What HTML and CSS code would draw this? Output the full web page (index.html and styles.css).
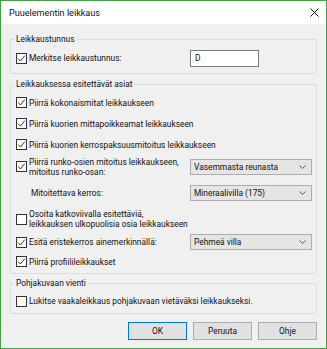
FILE: index.html
```html
<!DOCTYPE html>
<html lang="fi">
<head>
<meta charset="utf-8">
<title>Puuelementin leikkaus</title>
<link rel="stylesheet" href="styles.css">
</head>
<body>
<div class="dialog">
  <div class="titlebar">
    <span class="title">Puuelementin leikkaus</span>
    <svg class="close" width="9" height="9" viewBox="0 0 9 9"><path d="M0.5 0.5L8.5 8.5M8.5 0.5L0.5 8.5" stroke="#111" stroke-width="1"/></svg>
  </div>
  <div class="content">
    <fieldset class="group g1">
      <legend>Leikkaustunnus</legend>
      <div class="row h22 mt2">
        <div class="check"><span class="box"><svg viewBox="0 0 9 9"><polyline points="1.2,4.6 3.4,7 7.8,1.6" /></svg></span><span>Merkitse leikkaustunnus:</span></div>
        <div class="textbox">D</div>
      </div>
    </fieldset>

    <fieldset class="group g2">
      <legend>Leikkauksessa esitettävät asiat</legend>
      <div class="row h21 mt2">
        <div class="check"><span class="box"><svg viewBox="0 0 9 9"><polyline points="1.2,4.6 3.4,7 7.8,1.6" /></svg></span><span>Piirrä kokonaismitat leikkaukseen</span></div>
      </div>
      <div class="row h21">
        <div class="check"><span class="box"><svg viewBox="0 0 9 9"><polyline points="1.2,4.6 3.4,7 7.8,1.6" /></svg></span><span>Piirrä kuorien mittapoikkeamat leikkaukseen</span></div>
      </div>
      <div class="row h21">
        <div class="check wide"><span class="box"><svg viewBox="0 0 9 9"><polyline points="1.2,4.6 3.4,7 7.8,1.6" /></svg></span><span>Piirrä kuorien kerrospaksuusmitoitus leikkaukseen</span></div>
      </div>
      <div class="row h23">
        <div class="check"><span class="box"><svg viewBox="0 0 9 9"><polyline points="1.2,4.6 3.4,7 7.8,1.6" /></svg></span><span class="two">Piirrä runko-osien mitoitus leikkaukseen,<br>mitoitus runko-osan:</span></div>
        <div class="combo"><span>Vasemmasta reunasta</span><svg class="chev" width="7" height="4" viewBox="0 0 7 4"><polyline points="0.5,0.5 3.5,3.5 6.5,0.5"/></svg></div>
      </div>
      <div class="row h30">
        <div class="plain">Mitoitettava kerros:</div>
        <div class="combo"><span>Mineraalivilla (175)</span><svg class="chev" width="7" height="4" viewBox="0 0 7 4"><polyline points="0.5,0.5 3.5,3.5 6.5,0.5"/></svg></div>
      </div>
      <div class="row h22">
        <div class="check wide"><span class="box empty"></span><span class="two">Osoita katkoviivalla esitettäviä,<br>leikkauksen ulkopuolisia osia leikkaukseen</span></div>
      </div>
      <div class="row h24">
        <div class="check"><span class="box"><svg viewBox="0 0 9 9"><polyline points="1.2,4.6 3.4,7 7.8,1.6" /></svg></span><span>Esitä eristekerros ainemerkinnällä:</span></div>
        <div class="combo"><span>Pehmeä villa</span><svg class="chev" width="7" height="4" viewBox="0 0 7 4"><polyline points="0.5,0.5 3.5,3.5 6.5,0.5"/></svg></div>
      </div>
      <div class="row h15">
        <div class="check"><span class="box"><svg viewBox="0 0 9 9"><polyline points="1.2,4.6 3.4,7 7.8,1.6" /></svg></span><span>Piirrä profiilileikkaukset</span></div>
      </div>
    </fieldset>

    <fieldset class="group g3">
      <legend>Pohjakuvaan vienti</legend>
      <div class="row h20 mt2">
        <div class="check wide"><span class="box empty"></span><span>Lukitse vaakaleikkaus pohjakuvaan vietäväksi leikkaukseksi.</span></div>
      </div>
    </fieldset>

    <div class="buttons">
      <button class="btn default">OK</button>
      <button class="btn">Peruuta</button>
      <button class="btn">Ohje</button>
    </div>
  </div>
</div>
</body>
</html>
```

FILE: styles.css
```css
html, body {
  margin: 0;
  padding: 0;
  width: 327px;
  height: 349px;
  overflow: hidden;
}
body {
  font-family: Roboto, "Liberation Sans", sans-serif;
  font-size: 8.4px;
  color: #111;
}
.dialog {
  box-sizing: border-box;
  width: 327px;
  height: 349px;
  border: 1px solid #46a046;
  background: #f0f0f0;
  display: flex;
  flex-direction: column;
}
.titlebar {
  height: 23px;
  background: #fff;
  display: flex;
  align-items: center;
  justify-content: space-between;
  padding: 0 7px 0 8px;
}
.title {
  font-size: 9.1px;
}
.close {
  display: block;
}
.content {
  flex: 1;
  display: flex;
  flex-direction: column;
  padding: 0 9px;
}
.group {
  margin: 0;
  padding: 0 0 4px 0;
  border: 1px solid #dcdcdc;
  min-width: 0;
}
.group legend {
  margin-left: 3px;
  padding: 0 2px;
  line-height: 11px;
  height: 11px;
  font-size: 8.4px;
}
.g1 { margin-top: 10px; }
.g2 { margin-top: 5px; }
.g3 { margin-top: 4px; padding-bottom: 2px; }

.row {
  display: grid;
  grid-template-columns: 174px 122px;
  align-items: center;
  padding-left: 5px;
}
.mt2 { margin-top: 2px; }
.h15 { height: 15px; }
.h20 { height: 20px; }
.h21 { height: 21px; }
.h22 { height: 22px; }
.h23 { height: 23px; }
.h24 { height: 24px; }
.h30 { height: 30px; }

.check {
  display: flex;
  align-items: center;
  gap: 2px;
  white-space: nowrap;
}
.check.wide {
  grid-column: 1 / 3;
}
.two {
  line-height: 10px;
}
.box {
  box-sizing: border-box;
  width: 11px;
  height: 11px;
  border: 1px solid #333;
  background: #fff;
  flex: none;
  display: flex;
  align-items: center;
  justify-content: center;
}
.box svg {
  width: 9px;
  height: 9px;
  display: block;
}
.box polyline {
  fill: none;
  stroke: #333;
  stroke-width: 1;
}
.plain {
  padding-left: 15px;
}
.textbox {
  box-sizing: border-box;
  width: 69px;
  height: 17px;
  border: 1px solid #7a7a7a;
  background: #fff;
  padding-left: 4px;
  line-height: 15px;
}
.combo {
  box-sizing: border-box;
  width: 122px;
  height: 16px;
  border: 1px solid #adadad;
  background: #e5e5e5;
  display: flex;
  align-items: center;
  justify-content: space-between;
  padding: 0 5px 0 3px;
}
.chev polyline {
  fill: none;
  stroke: #555;
  stroke-width: 1;
}
.buttons {
  margin-top: 8px;
  display: flex;
  justify-content: flex-end;
  gap: 6px;
}
.btn {
  box-sizing: border-box;
  width: 59px;
  height: 18px;
  margin: 0;
  padding: 0;
  border: 1px solid #adadad;
  background: #e1e1e1;
  font-family: Roboto, "Liberation Sans", sans-serif;
  font-size: 8.4px;
  color: #111;
}
.btn.default {
  border-color: #0078d7;
}
```
